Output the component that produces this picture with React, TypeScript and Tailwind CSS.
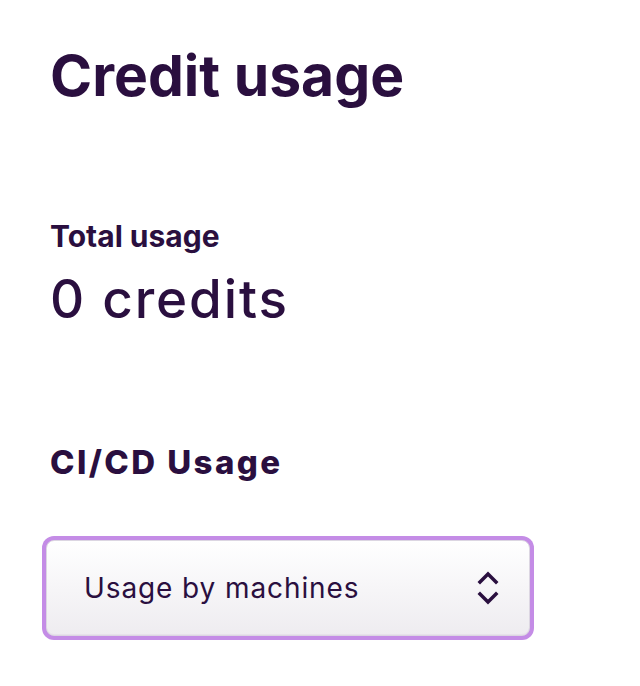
import React from "react";

export default function App() {
  return (
    <div className="min-h-[686px] w-[640px] bg-white pl-[50px] pt-[41px] text-[#2a0f3f]" style={{ fontFamily: "Inter, 'Noto Sans', sans-serif" }}>
      <h1 className="text-[57px] font-bold leading-[70px]">Credit usage</h1>
      <div className="mt-[107px]">
        <div className="text-[30px] font-bold leading-[36px]">Total usage</div>
        <div className="mt-[13px] text-[53px] font-medium leading-[64px] tracking-[1.9px]">0 credits</div>
      </div>
      <h2 className="mt-[111px] text-[33px] font-extrabold leading-[40px] tracking-[2.4px]">CI/CD Usage</h2>
      <div className="mt-[54px] -ml-[8px] w-[492px] rounded-[12px] bg-[#c48ce6] p-[4px]">
        <div className="flex h-[96px] items-center justify-between rounded-[8px] border border-[#dcd6e2] bg-gradient-to-b from-white to-[#eeecf0] pl-[37px] pr-[30px] shadow-[inset_0_-1px_0_#e6e2ea]">
          <span className="text-[28px] leading-[32px] tracking-[0.9px]">Usage by machines</span>
          <svg width="22" height="36" viewBox="0 0 22 36" fill="none" stroke="#2a0f3f" strokeWidth="3.5" strokeLinecap="square" strokeLinejoin="miter">
            <path d="M3 12 L11 4 L19 12" />
            <path d="M3 24 L11 32 L19 24" />
          </svg>
        </div>
      </div>
    </div>
  );
}
